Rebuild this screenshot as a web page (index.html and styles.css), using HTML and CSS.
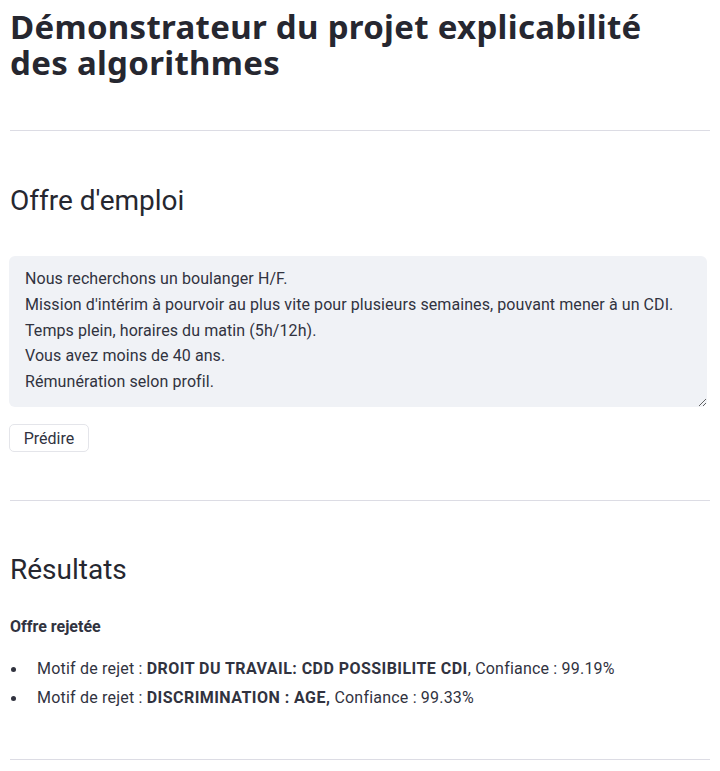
FILE: index.html
```html
<!DOCTYPE html>
<html lang="fr">
<head>
<meta charset="utf-8">
<title>Démonstrateur</title>
<link rel="stylesheet" href="styles.css">
</head>
<body>
<main class="main">
  <h1 class="title">Démonstrateur du projet explicabilité des algorithmes</h1>
  <hr class="rule rule-top">
  <h2 class="section-title section-offer">Offre d'emploi</h2>
  <textarea class="offer" rows="5">Nous recherchons un boulanger H/F.
Mission d'intérim à pourvoir au plus vite pour plusieurs semaines, pouvant mener à un CDI.
Temps plein, horaires du matin (5h/12h).
Vous avez moins de 40 ans.
Rémunération selon profil.</textarea>
  <div class="actions"><button class="btn" type="button">Prédire</button></div>
  <hr class="rule rule-mid">
  <h2 class="section-title section-results">Résultats</h2>
  <p class="verdict">Offre rejetée</p>
  <ul class="reasons">
    <li>Motif de rejet : <strong>DROIT DU TRAVAIL: CDD POSSIBILITE CDI</strong>, Confiance : 99.19%</li>
    <li>Motif de rejet : <strong>DISCRIMINATION : AGE,</strong> Confiance : 99.33%</li>
  </ul>
  <hr class="rule rule-bottom">
</main>
</body>
</html>
```
FILE: styles.css
```css
* { box-sizing: border-box; }
html, body { margin: 0; padding: 0; background: #ffffff; }
body {
  font-family: Roboto, "Noto Sans", "Liberation Sans", sans-serif;
  color: #31333f;
  font-size: 16px;
}
.main {
  padding: 9px 10px 20px 10px;
  width: 720px;
}
.title {
  margin: 0;
  max-width: 670px;
  font-family: "Noto Sans", Roboto, sans-serif;
  font-size: 33px;
  line-height: 36px;
  font-weight: 700;
  letter-spacing: 0.3px;
  color: #262730;
}
.rule {
  border: none;
  border-top: 1px solid #dcdce4;
  margin: 0;
}
.rule-top { margin-top: 49px; }
.section-title {
  margin: 0;
  font-size: 28px;
  font-weight: 400;
  line-height: 36px;
  color: #262730;
}
.section-offer { margin-top: 52px; }
.offer {
  display: block;
  margin-top: 37px;
  width: 698px;
  height: 151px;
  margin-left: -1px;
  background: #f0f2f6;
  border: none;
  border-radius: 6px;
  padding: 10px 16px;
  font-family: inherit;
  font-size: 16px;
  line-height: 25.8px;
  letter-spacing: 0.08px;
  color: #31333f;
  resize: vertical;
  outline: none;
}
.actions { margin-top: 17px; }
.btn {
  margin-left: -1px;
  height: 28px;
  width: 80px;
  padding: 0;
  background: #ffffff;
  border: 1px solid #e4e5ea;
  border-radius: 5px;
  font-family: inherit;
  font-size: 16px;
  color: #31333f;
}
.rule-mid { margin-top: 48px; }
.section-results { margin-top: 51px; }
.verdict {
  margin: 29px 0 0;
  font-weight: 700;
  font-size: 16px;
}
.reasons {
  margin: 18px 0 0;
  padding: 0;
  line-height: 29px;
  letter-spacing: 0.2px;
}
.reasons strong { letter-spacing: 0.45px; }
.reasons li {
  list-style: none;
  display: flex;
  align-items: center;
  white-space: pre;
}
.reasons li::before {
  content: "";
  width: 5px;
  height: 5px;
  border-radius: 50%;
  background: #31333f;
  margin: 1px 21px 0 1px;
  flex: none;
}
.rule-bottom { margin-top: 47px; }
```
